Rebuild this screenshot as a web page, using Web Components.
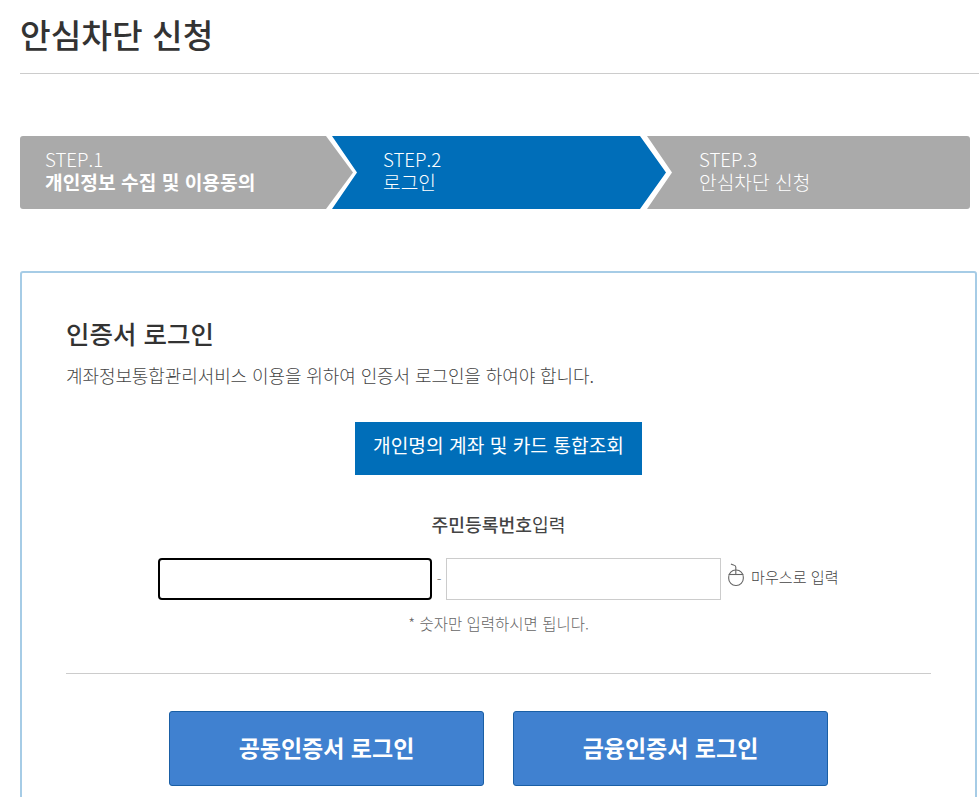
<!DOCTYPE html>
<html lang="ko"><head><meta charset="utf-8"><title>안심차단 신청</title>
<style>
html,body{margin:0;padding:0;background:#fff;height:797px;overflow:hidden}
body{font-family:"Noto Sans CJK KR","Noto Sans",sans-serif;color:#333}
step-item b{font-weight:700}
</style></head><body>
<app-page>
  <page-title>안심차단 신청</page-title>
  <step-bar>
    <step-item num="STEP.1" kind="first"><b>개인정보 수집 및 이용동의</b></step-item>
    <step-item num="STEP.2" kind="active">로그인</step-item>
    <step-item num="STEP.3" kind="last">안심차단 신청</step-item>
  </step-bar>
  <login-panel></login-panel>
</app-page>
<script>
function def(name,html,init){
  customElements.define(name,class extends HTMLElement{
    connectedCallback(){ if(this.shadowRoot) return;
      const r=this.attachShadow({mode:'open'});
      r.innerHTML=typeof html==='function'?html(this):html;
      if(init) init(r,this);
    }
  });
}
def('app-page',`<style>:host{display:block;padding-left:20px}</style><slot></slot>`);
def('page-title',`<style>
:host{display:block;height:73px;border-bottom:1px solid #ccc;box-sizing:content-box}
h1{margin:0;font:500 33.35px/68px "Noto Sans CJK KR",sans-serif;color:#333}
</style><h1><slot></slot></h1>`);
def('step-bar',`<style>
:host{display:flex;width:950px;height:73px;margin-top:62px}
</style><slot></slot>`);
def('step-item',(h)=>{
 const k=h.getAttribute('kind');
 const s={first:'width:333px;padding-left:25px;background:#aaa;border-radius:3px 0 0 3px;clip-path:polygon(0 0,306px 0,333px 36.5px,306px 73px,0 73px)',
 active:'width:334px;margin-left:-21px;padding-left:51px;background:#006eb9;clip-path:polygon(0 0,308px 0,334px 36.5px,308px 73px,0 73px,25px 36.5px)',
 last:'flex:1;margin-left:-19px;padding-left:52px;background:#aaa;border-radius:0 3px 3px 0;clip-path:polygon(0 0,100% 0,100% 100%,0 100%,25px 36.5px)'}[k];
 return `<style>
:host{display:block;box-sizing:border-box;height:73px;${s};color:#fff;font:300 19.2px/23px "Noto Sans CJK KR",sans-serif;padding-top:11px}
.n{display:block;font-size:18.7px;margin-bottom:1px}
</style><span class="n">${h.getAttribute('num')}</span><slot></slot>`});
def('login-panel',`<style>
:host{display:block;box-sizing:border-box;width:957px;margin-top:62px;border:2px solid #a6cce6;border-radius:3px;padding:41px 44px 60px;color:#555}
h2{margin:0;font:500 25.5px/37px "Noto Sans CJK KR",sans-serif;color:#333}
p{margin:0}
.lead{font:300 18px/24px "Noto Sans CJK KR",sans-serif;margin-top:12px;letter-spacing:-.1px;color:#444}
.center{display:flex;justify-content:center}
.view{margin-top:35px}
.label{margin-top:36px;text-align:center;font:400 18.2px/26px "Noto Sans CJK KR",sans-serif;color:#444}
.label b{font-weight:500}
.note{margin-top:12px;text-align:center;font:300 15.5px/22px "Noto Sans CJK KR",sans-serif;color:#666}
hr{border:0;border-top:1px solid #ccc;margin:39px 0 37px}
.btns{display:flex;justify-content:center;gap:29px}
</style>
<h2>인증서 로그인</h2>
<p class="lead">계좌정보통합관리서비스 이용을 위하여 인증서 로그인을 하여야 합니다.</p>
<div class="center view"><view-button>개인명의 계좌 및 카드 통합조회</view-button></div>
<p class="label"><b>주민등록번호</b>입력</p>
<id-entry></id-entry>
<p class="note">* 숫자만 입력하시면 됩니다.</p>
<hr>
<div class="btns"><login-button>공동인증서 로그인</login-button><login-button>금융인증서 로그인</login-button></div>`);
def('view-button',`<style>
:host{display:flex;align-items:center;justify-content:center;box-sizing:border-box;width:287px;height:53px;padding-bottom:5px;background:#006eb9;color:#fff;font:400 19.2px/1 "Noto Sans CJK KR",sans-serif}
</style><slot></slot>`);
def('login-button',`<style>
:host{display:flex;align-items:center;justify-content:center;box-sizing:border-box;width:315px;height:75px;padding-bottom:2px;background:#4081d0;border:1px solid #1a5fa5;border-radius:3px;color:#fff;font:700 23px/1 "Noto Sans CJK KR",sans-serif}
</style><slot></slot>`);
def('id-entry',`<style>
:host{display:flex;align-items:center;margin:21px 0 0 92px;height:42px;color:#666}
input{display:block;box-sizing:border-box;height:42px;margin:0;padding:0 8px;background:#fff;outline:none}
.a{width:274px;border:2px solid #000;border-radius:4px}
.b{width:275px;border:1px solid #ccc}
.d{width:14px;text-align:center;font:300 14px/1 "Noto Sans CJK KR",sans-serif}
svg{display:block;margin:0 7px 8px 7px;flex:none}
.m{font:300 15.1px/1 "Noto Sans CJK KR",sans-serif;color:#444;margin-bottom:4px}
</style>
<input class="a" type="text" aria-label="주민등록번호 앞자리"><span class="d">-</span><input class="b" type="text" aria-label="주민등록번호 뒷자리">
<svg width="16" height="24" viewBox="0 0 16 24" fill="none" stroke="#666" stroke-width="1.1"><path d="M3 1C5 2.5 7.8 1.5 7.8 4V11"/><rect x="0.7" y="7" width="14.6" height="15.5" rx="7"/><path d="M0.7 11.5h14.6"/></svg>
<span class="m">마우스로 입력</span>`);
</script>
</body></html>
